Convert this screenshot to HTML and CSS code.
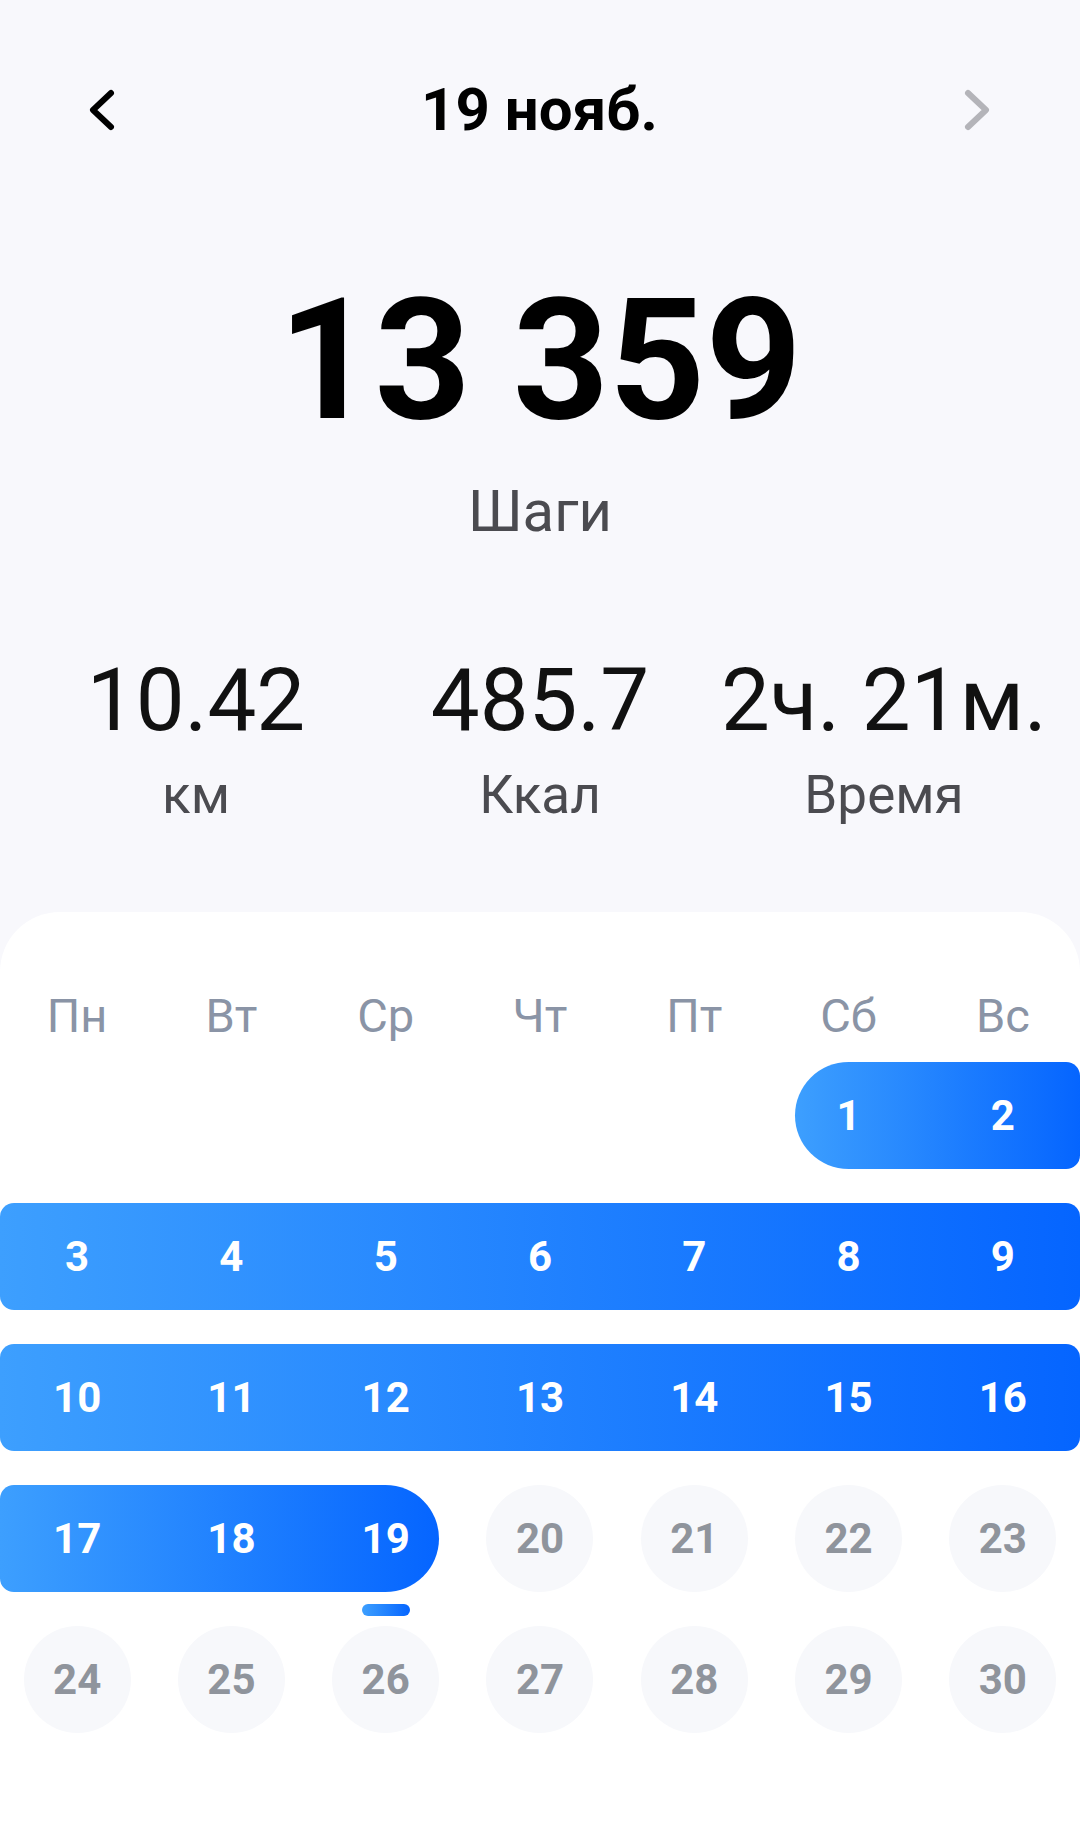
FILE: index.html
```html
<!DOCTYPE html>
<html lang="ru">
<head>
<meta charset="UTF-8" />
<meta name="viewport" content="width=device-width, initial-scale=1" />
<title>Шаги — 19 нояб.</title>
<link rel="stylesheet" href="styles.css">
</head>
<body>

<div class="screen">
  <header class="topbar">
    <button class="nav" aria-label="Предыдущий день">
      <svg viewBox="0 0 44 44" aria-hidden="true"><path d="M33 5 L15 22 L33 39" /></svg>
    </button>
    <h1 class="date">19 нояб.</h1>
    <button class="nav nav-next" aria-label="Следующий день">
      <svg viewBox="0 0 44 44" aria-hidden="true"><path d="M11 5 L29 22 L11 39" /></svg>
    </button>
  </header>

  <section class="summary">
    <div class="steps">13 359</div>
    <div class="steps-label">Шаги</div>
  </section>

  <section class="stats">
    <div class="stat">
      <div class="stat-value">10.42</div>
      <div class="stat-label">км</div>
    </div>
    <div class="stat">
      <div class="stat-value">485.7</div>
      <div class="stat-label">Ккал</div>
    </div>
    <div class="stat">
      <div class="stat-value">2ч. 21м.</div>
      <div class="stat-label">Время</div>
    </div>
  </section>

  <section class="calendar">
    <div class="weekdays">
      <span>Пн</span><span>Вт</span><span>Ср</span><span>Чт</span><span>Пт</span><span>Сб</span><span>Вс</span>
    </div>

    <div class="weeks">
      <div class="week">
        <span class="day"></span><span class="day"></span><span class="day"></span><span class="day"></span><span class="day"></span>
        <div class="range span-2 round-start">
          <span class="day">1</span><span class="day">2</span>
        </div>
      </div>

      <div class="week">
        <div class="range span-7">
          <span class="day">3</span><span class="day">4</span><span class="day">5</span><span class="day">6</span><span class="day">7</span><span class="day">8</span><span class="day">9</span>
        </div>
      </div>

      <div class="week">
        <div class="range span-7">
          <span class="day">10</span><span class="day">11</span><span class="day">12</span><span class="day">13</span><span class="day">14</span><span class="day">15</span><span class="day">16</span>
        </div>
      </div>

      <div class="week">
        <div class="range span-3 round-end">
          <span class="day">17</span><span class="day">18</span><span class="day today">19</span>
        </div>
        <span class="day"><span class="dot">20</span></span>
        <span class="day"><span class="dot">21</span></span>
        <span class="day"><span class="dot">22</span></span>
        <span class="day"><span class="dot">23</span></span>
      </div>

      <div class="week">
        <span class="day"><span class="dot">24</span></span>
        <span class="day"><span class="dot">25</span></span>
        <span class="day"><span class="dot">26</span></span>
        <span class="day"><span class="dot">27</span></span>
        <span class="day"><span class="dot">28</span></span>
        <span class="day"><span class="dot">29</span></span>
        <span class="day"><span class="dot">30</span></span>
      </div>
    </div>
  </section>
</div>

</body>
</html>
```

FILE: styles.css
```css
html, body {
  margin: 0;
  padding: 0;
}
body {
  background-color: #f8f8fc;
  color: #000;
  font-family: Roboto, "Noto Sans", "Liberation Sans", sans-serif;
}
.screen {
  min-height: 100vh;
  display: flex;
  flex-direction: column;
}

/* шапка */
.topbar {
  display: grid;
  grid-template-columns: 1fr auto 1fr;
  align-items: center;
  height: 80px;
  margin-top: 70px;
  padding: 0 79px 0 78px;
}
.nav {
  width: 44px;
  height: 44px;
  padding: 0;
  border: 0;
  background: none;
  justify-self: start;
}
.nav svg {
  display: block;
  width: 44px;
  height: 44px;
  fill: none;
  stroke: #000;
  stroke-width: 6;
  stroke-linecap: round;
  stroke-linejoin: round;
}
.nav-next {
  justify-self: end;
}
.nav-next svg {
  stroke: #b4b4b9;
}
.date {
  margin: 0;
  font-size: 60px;
  font-weight: 700;
  line-height: 1;
}

/* шаги */
.summary {
  text-align: center;
  margin-top: 127px;
}
.steps {
  font-size: 168px;
  font-weight: 700;
  line-height: 1;
}
.steps-label {
  margin-top: 37px;
  font-size: 58px;
  line-height: 1;
  color: #4b4b50;
}

/* показатели */
.stats {
  display: grid;
  grid-template-columns: repeat(3, 1fr);
  padding: 0 24px;
  margin-top: 117px;
  text-align: center;
}
.stat-value {
  font-size: 87px;
  line-height: 1;
  color: #111;
}
.stat-label {
  margin-top: 25px;
  font-size: 53px;
  line-height: 1;
  color: #4b4b50;
}

/* календарь */
.calendar {
  flex: 1;
  margin-top: 90px;
  padding-top: 80px;
  background-color: #fff;
  border-radius: 60px 60px 0 0;
}
.weekdays {
  display: grid;
  grid-template-columns: repeat(7, 1fr);
  text-align: center;
  font-size: 47px;
  line-height: 1;
  color: #8a94a6;
}
.weeks {
  display: flex;
  flex-direction: column;
  gap: 34px;
  margin-top: 23px;
}
.week {
  display: grid;
  grid-template-columns: repeat(7, 1fr);
  height: 107px;
}
.day {
  position: relative;
  display: flex;
  align-items: center;
  justify-content: center;
  font-size: 42px;
  font-weight: 700;
  line-height: 1;
}
.dot {
  display: flex;
  align-items: center;
  justify-content: center;
  width: 107px;
  height: 107px;
  border-radius: 50%;
  background-color: #f7f8fb;
  color: #8f949c;
}

.range {
  display: flex;
  color: #fff;
  background: linear-gradient(90deg, #3d9ffe, #0565ff);
  border-radius: 14px;
}
.range .day {
  flex: 1;
}
.span-2 { grid-column: span 2; }
.span-3 { grid-column: span 3; }
.span-7 { grid-column: span 7; }

.round-start {
  margin-left: 23.64px;
  border-radius: 54px 14px 14px 54px;
}
.round-start .day:first-child {
  margin-left: -23.64px;
}
.round-end {
  margin-right: 23.64px;
  border-radius: 14px 54px 54px 14px;
}
.round-end .day:last-child {
  margin-right: -23.64px;
}

/* метка сегодняшнего дня */
.today::after {
  content: "";
  position: absolute;
  left: 50%;
  top: calc(100% + 12px);
  width: 48px;
  height: 12px;
  margin-left: -24px;
  border-radius: 6px;
  background: linear-gradient(90deg, #3d9ffe, #0565ff);
}
```
